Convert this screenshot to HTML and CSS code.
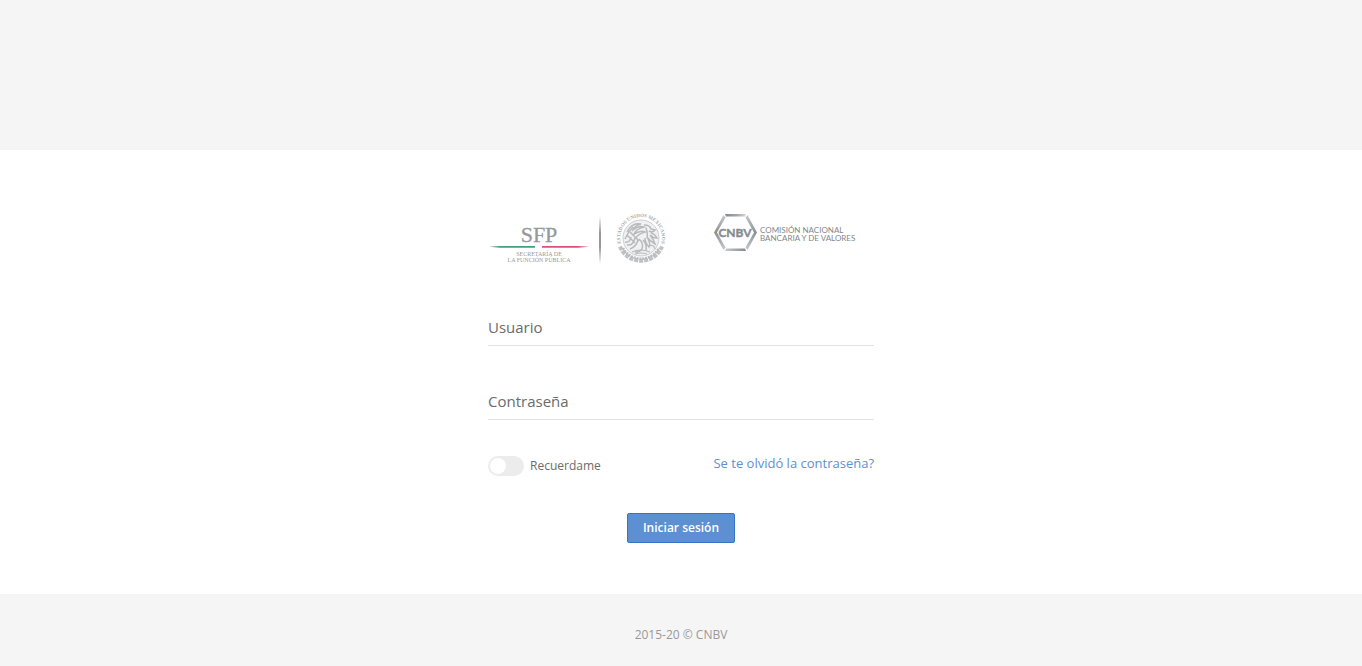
FILE: index.html
```html
<!DOCTYPE html>
<html lang="es">
<head>
<meta charset="utf-8">
<meta name="viewport" content="width=device-width, initial-scale=1">
<title>Iniciar sesión</title>
<link rel="stylesheet" href="styles.css">
</head>
<body>
<header class="top"></header>
<main class="panel">
  <form class="login">
    <div class="logos">
      <svg class="logo-sfp" width="180" height="56" viewBox="0 0 180 56" role="img" aria-label="SFP Secretaría de la Función Pública">
        <defs>
          <linearGradient id="bar" x1="0" y1="0" x2="0" y2="1">
            <stop offset="0" stop-color="#999" stop-opacity="0"/>
            <stop offset=".35" stop-color="#999"/>
            <stop offset=".65" stop-color="#999"/>
            <stop offset="1" stop-color="#999" stop-opacity="0"/>
          </linearGradient>
          <path id="arc" d="M133.500 35A20.800 20.800 0 1 1 172.500 35"/>
        </defs>
        <text class="sfp" x="51" y="32">SFP</text>
        <path d="M1 36.800L12 36H47v1.700H12z" fill="#3fa180"/>
        <path d="M54 36H90L101 36.800L90 37.700H54z" fill="#df4f76"/>
        <text class="sfp-sub" x="51" y="46">SECRETARÍA DE</text>
        <text class="sfp-sub" x="51" y="52">LA FUNCIÓN PÚBLICA</text>
        <rect x="111" y="6" width="2" height="48" fill="url(#bar)"/>
        <text class="seal-text"><textPath href="#arc" startOffset="50%">ESTADOS UNIDOS MEXICANOS</textPath></text>
        <circle cx="153" cy="28" r="18" fill="#f1f1f2"/>
        <g fill="none" stroke="#b9babc">
          <circle cx="153" cy="28" r="18" stroke-width=".7"/>
          <path d="M132 36.500A22.600 22.600 0 0 0 174 36.500" stroke-width="4" stroke-dasharray="4 1" stroke="#c0c1c3"/>
          <path d="M135 38A20.500 20.500 0 0 0 171 38" stroke-width="2.600" stroke-dasharray="2 .9"/>
          <path d="M139 22q5-10 14-8q-7 2-8 6q6-5 11-3q-8 2-10 7q7-4 11-2q-7 2-9 6M137 29q3-7 8-12M137 32q5 1 6-5M139 35q6 1 8-7M142 39q6-2 8-9M156 15q6 0 7 4l4 1q-2 3-6 1M158 18q2 6 1 10M163 23q4 1 6 5q-4 0-7-3q4 5 5 9q-5-3-8-7q4 6 2 10q-4-4-4-9M151 29q5 4 3 10q-2 3-7 3M155 30q4 4 3 11M139 25l8 8M142 22l9 9" stroke-width="1.500"/>
          <path d="M144 42q8-4 18 0M147 44q6-2 12 0M160 36q6-2 7 3" stroke-width="1.200"/>
        </g>
      </svg>
      <svg class="logo-cnbv" width="160" height="56" viewBox="0 0 160 56" role="img" aria-label="CNBV Comisión Nacional Bancaria y de Valores">
        <defs>
          <linearGradient id="steel" x1="0" y1="0" x2="1" y2="0">
            <stop offset="0" stop-color="#83898d"/>
            <stop offset=".55" stop-color="#a1a5a8"/>
            <stop offset="1" stop-color="#d6d8d9"/>
          </linearGradient>
          <linearGradient id="steel2" x1="0" y1="0" x2="1" y2="0">
            <stop offset="0" stop-color="#c8cbcd"/>
            <stop offset="1" stop-color="#83898d"/>
          </linearGradient>
          <linearGradient id="side" x1="0" y1="0" x2="0" y2="1">
            <stop offset="0" stop-color="#c8cbcd"/>
            <stop offset=".5" stop-color="#8a9094"/>
            <stop offset="1" stop-color="#c8cbcd"/>
          </linearGradient>
        </defs>
        <path d="M11 4H32L31 6.500H12z" fill="url(#steel)"/>
        <path d="M11 41H32L31 38.500H12z" fill="url(#steel2)"/>
        <path d="M9.500 5L11.500 7.500L3 22.500L11.500 37.500L9.500 40L0 22.500z" fill="url(#side)"/>
        <path d="M33.500 5L31.500 7.500L40 22.500L31.500 37.500L33.500 40L43 22.500z" fill="url(#side)"/>
        <text class="cnbv" x="21" y="27">CNBV</text>
        <text class="cnbv-sub" x="46" y="23">COMISIÓN NACIONAL</text>
        <text class="cnbv-sub" x="46" y="31">BANCARIA Y DE VALORES</text>
      </svg>
    </div>
    <div class="fields">
      <div class="field">
        <label for="user">Usuario</label>
        <input id="user" type="text" autocomplete="username">
      </div>
      <div class="field">
        <label for="pass">Contraseña</label>
        <input id="pass" type="password" autocomplete="current-password">
      </div>
    </div>
    <div class="options">
      <label class="remember"><input class="switch" type="checkbox">Recuerdame</label>
      <a class="forgot" href="#">Se te olvidó la contraseña?</a>
    </div>
    <button class="submit" type="submit">Iniciar sesión</button>
  </form>
</main>
<footer class="footer">2015-20 © CNBV</footer>
</body>
</html>
```
FILE: styles.css
```css
* { box-sizing: border-box; }
body {
  margin: 0;
  min-height: 100vh;
  display: flex;
  flex-direction: column;
  background: #f5f5f5;
  color: #6b6b6b;
  font: 13px/20px "Open Sans", sans-serif;
}
.top { height: 150px; }
.panel {
  display: flex;
  justify-content: center;
  padding: 60px 20px 51px;
  background: #fff;
}
.login {
  display: flex;
  flex-direction: column;
  width: 100%;
  max-width: 386px;
}
.logos {
  display: grid;
  grid-template-columns: 226px 1fr;
  margin-bottom: 46px;
}
.logos svg { display: block; }
.fields {
  display: grid;
  gap: 40px;
  margin-bottom: 33px;
}
.field {
  display: grid;
  height: 34px;
}
.field label, .field input { grid-area: 1 / 1; }
.field label {
  padding-top: 5px;
  font-size: 15px;
  pointer-events: none;
}
.field input {
  width: 100%;
  padding: 6px 0;
  border: 0;
  border-bottom: 1px solid #e3e3e3;
  outline: 0;
  background: transparent;
  color: #444;
  font: inherit;
}
.options {
  display: flex;
  justify-content: space-between;
  align-items: flex-start;
  margin-bottom: 37px;
}
.remember {
  display: flex;
  align-items: center;
  gap: 6px;
  padding-top: 3px;
  font-size: 12px;
}
.switch {
  appearance: none;
  width: 36px;
  height: 20px;
  margin: 0;
  padding: 2px;
  border-radius: 10px;
  background: #ececec;
}
.switch::before {
  content: "";
  display: block;
  width: 16px;
  height: 16px;
  border-radius: 50%;
  background: #fff;
}
.switch:checked { background: #5c90d2; }
.switch:checked::before { margin-left: auto; }
.forgot { color: #5c90d2; text-decoration: none; }
.submit {
  align-self: center;
  height: 30px;
  padding: 0 15px;
  border: 1px solid #3675c5;
  border-radius: 2px;
  background: #5c90d2;
  color: #fff;
  font: 600 12px/18px "Open Sans", sans-serif;
}
.footer {
  padding: 31px 20px 21px;
  color: #999;
  font-size: 12px;
  text-align: center;
}
.sfp {
  fill: #97989a;
  stroke: #97989a;
  stroke-width: .3px;
  font: 22px "Liberation Serif", serif;
  text-anchor: middle;
}
.sfp-sub {
  fill: #98999b;
  font: 6px "Liberation Serif", serif;
  text-anchor: middle;
}
.seal-text {
  fill: #a9aaac;
  font: bold 5px "Liberation Serif", serif;
  text-anchor: middle;
}
.cnbv {
  fill: #858b90;
  stroke: #858b90;
  stroke-width: .4px;
  font: bold 12px Lato, sans-serif;
  text-anchor: middle;
}
.cnbv-sub {
  fill: #82878c;
  font: 8px Lato, sans-serif;
}
```
